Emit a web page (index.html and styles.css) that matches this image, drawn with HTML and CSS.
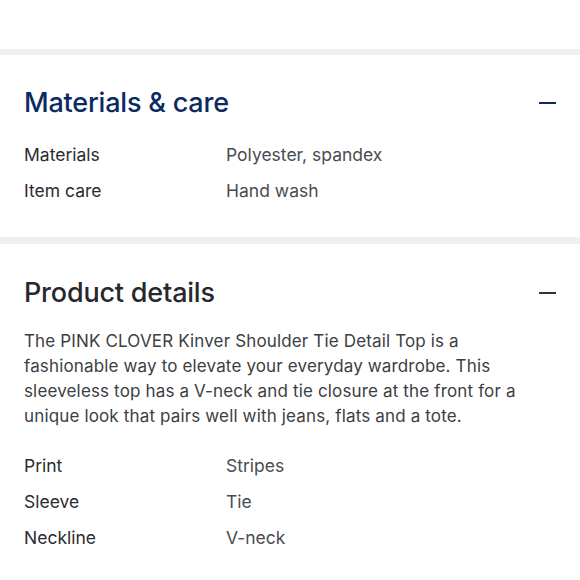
FILE: index.html
```html
<!DOCTYPE html>
<html>
<head>
<meta charset="utf-8">
<link rel="stylesheet" href="styles.css">
</head>
<body>
<div class="top"></div>
<div class="divider"></div>
<section class="panel panel-materials">
  <div class="panel-head">
    <h2 class="title title-navy">Materials &amp; care</h2>
    <span class="minus minus-navy"></span>
  </div>
  <div class="specs">
    <div class="label">Materials</div><div class="value">Polyester, spandex</div>
    <div class="label">Item care</div><div class="value">Hand wash</div>
  </div>
</section>
<div class="divider divider-b"></div>
<section class="panel panel-details">
  <div class="panel-head">
    <h2 class="title">Product details</h2>
    <span class="minus"></span>
  </div>
  <p class="desc">The PINK CLOVER Kinver Shoulder Tie Detail Top is a fashionable way to elevate your everyday wardrobe. This sleeveless top has a V-neck and tie closure at the front for a unique look that pairs well with jeans, flats and a tote.</p>
  <div class="specs">
    <div class="label">Print</div><div class="value">Stripes</div>
    <div class="label">Sleeve</div><div class="value">Tie</div>
    <div class="label">Neckline</div><div class="value">V-neck</div>
  </div>
</section>
</body>
</html>
```
FILE: styles.css
```css
* { box-sizing: border-box; }
html, body { margin: 0; padding: 0; background: #fff; }
body {
  font-family: Inter, "Noto Sans", sans-serif;
  color: #2e2f32;
  width: 580px;
  overflow: hidden;
}
.top { height: 49px; }
.divider { height: 6px; background: #f0f0f1; }
.divider-b { height: 7px; }
.panel { padding: 0 24px; }
.panel-materials { padding-top: 32px; padding-bottom: 28px; }
.panel-details { padding-top: 33px; }
.panel-head {
  display: flex;
  align-items: center;
  justify-content: space-between;
  height: 32px;
}
.title {
  margin: 0;
  font-size: 27px;
  line-height: 32px;
  font-weight: 500;
  color: #27282b;
  letter-spacing: -0.2px;
}
.title-navy { color: #0c2a62; }
.minus {
  display: block;
  width: 17px;
  height: 2px;
  background: #303236;
}
.minus-navy { background: #0c2a62; }
.specs {
  display: grid;
  grid-template-columns: 202px 1fr;
  margin-top: 18px;
  font-size: 17.5px;
  line-height: 36px;
}
.label { color: #2b2c2f; }
.value { color: #4a4c50; }
.desc {
  margin: 20px 0 0;
  width: 525px;
  font-size: 17px;
  line-height: 25px;
  color: #3c3e42;
  letter-spacing: 0.15px;
}
.desc + .specs { margin-top: 19px; }
```
